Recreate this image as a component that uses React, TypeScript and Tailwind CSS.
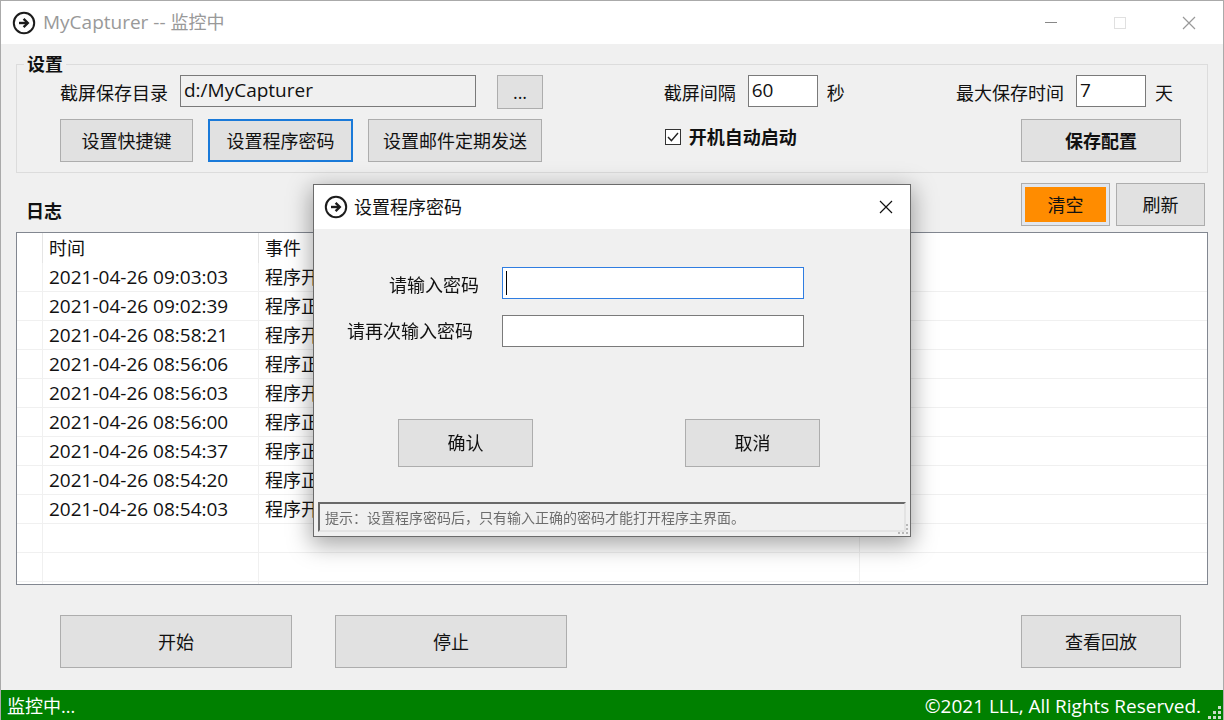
// src/App.tsx
import React from "react";

const logs = [
  { time: "2021-04-26 09:03:03", event: "程序开启" },
  { time: "2021-04-26 09:02:39", event: "程序正常退出" },
  { time: "2021-04-26 08:58:21", event: "程序开启" },
  { time: "2021-04-26 08:56:06", event: "程序正常退出" },
  { time: "2021-04-26 08:56:03", event: "程序开启" },
  { time: "2021-04-26 08:56:00", event: "程序正常退出" },
  { time: "2021-04-26 08:54:37", event: "程序正常退出" },
  { time: "2021-04-26 08:54:20", event: "程序正常退出" },
  { time: "2021-04-26 08:54:03", event: "程序开启" },
];

const button = "border border-[#adadad] bg-[#e1e1e1] text-center";
const textBox = "h-8 border border-[#7a7a7a] px-[3px] pb-0.5 text-[19px] outline-none";
const cell = "h-[29px] border-b border-r border-[#f0f0f0] p-0 pl-1.5 leading-7";

const AppIcon: React.FC = () => (
  <svg
    className="size-6 shrink-0"
    viewBox="0 0 24 24"
    fill="none"
    stroke="#1c1c1c"
    strokeWidth="2"
    aria-hidden="true"
  >
    <circle cx="12" cy="12" r="10.2" />
    <path d="M7 12h8.5" strokeWidth="2.4" />
    <path d="M11.6 7.8l4.2 4.2-4.2 4.2" strokeWidth="2.4" />
  </svg>
);

const CloseIcon: React.FC = () => (
  <svg
    className="size-3.5"
    viewBox="0 0 14 14"
    fill="none"
    stroke="currentColor"
    strokeWidth="1.2"
    aria-hidden="true"
  >
    <path d="M1 1l12 12M13 1L1 13" />
  </svg>
);

// Three-step triangle of dots in the corner of a resizable window
const Grip: React.FC = () => (
  <svg className="size-3.5" viewBox="0 0 14 14" fill="currentColor" aria-hidden="true">
    <path d="M1 10h3v3H1zM6 10h3v3H6zM11 10h3v3h-3zM6 5h3v3H6zM11 5h3v3h-3zM11 0h3v3h-3z" />
  </svg>
);

const TitleBar: React.FC = () => (
  <header className="flex h-[43px] items-center bg-white pl-[11px] text-[#999]">
    <AppIcon />
    <h1 className="ml-[7px] flex-1 pb-0.5">
      <span className="text-[19px]">MyCapturer -- </span>监控中
    </h1>
    <div className="flex self-stretch">
      <button aria-label="最小化" className="flex w-[69px] items-center justify-center">
        <span className="h-px w-3 bg-[#888]" />
      </button>
      <button
        aria-label="最大化"
        disabled
        className="flex w-[69px] items-center justify-center"
      >
        <span className="size-3 border border-[#e0e0e0]" />
      </button>
      <button aria-label="关闭" className="flex w-[69px] items-center justify-center">
        <CloseIcon />
      </button>
    </div>
  </header>
);

const Settings: React.FC = () => (
  <fieldset className="mx-[15px] mt-[9px] border border-[#dcdcdc] px-[7px] pb-2.5">
    <legend className="px-[3px] font-bold leading-[22px]">设置</legend>
    <div className="grid grid-cols-[603fr_292fr_auto] gap-y-2.5 pl-9 pr-[19px]">
      <div className="flex h-[34px] items-start">
        <label htmlFor="dir" className="leading-9">
          截屏保存目录
        </label>
        <input
          id="dir"
          readOnly
          defaultValue="d:/MyCapturer"
          className={`${textBox} ml-3 w-[296px] bg-[#f0f0f0]`}
        />
        <button className={`${button} ml-[21px] h-[34px] w-[46px]`}>...</button>
      </div>
      <div className="flex h-[34px] items-start">
        <label htmlFor="interval" className="leading-9">
          截屏间隔
        </label>
        <input
          id="interval"
          defaultValue="60"
          className={`${textBox} ml-3 mr-[9px] w-[70px] bg-white`}
        />
        <span className="leading-9">秒</span>
      </div>
      <div className="flex h-[34px] items-start justify-end pr-2">
        <label htmlFor="keep" className="leading-9">
          最大保存时间
        </label>
        <input
          id="keep"
          defaultValue="7"
          className={`${textBox} ml-3 mr-[9px] w-[70px] bg-white`}
        />
        <span className="leading-9">天</span>
      </div>

      <div className="flex h-[43px] gap-[15px]">
        <button className={`${button} w-[133px]`}>设置快捷键</button>
        <button className="w-[145px] border-2 border-[#1a7ad9] bg-[#e1e1e1] text-center">
          设置程序密码
        </button>
        <button className={`${button} w-[174px]`}>设置邮件定期发送</button>
      </div>
      <div className="pt-1.5">
        <label className="flex w-fit items-center gap-2 pl-px font-bold">
          <span className="relative flex">
            <input
              type="checkbox"
              defaultChecked
              className="peer size-4 appearance-none border border-[#333] bg-white"
            />
            <svg
              className="pointer-events-none absolute inset-0 hidden size-4 peer-checked:block"
              viewBox="0 0 16 16"
              fill="none"
              stroke="#222"
              strokeWidth="1.4"
              aria-hidden="true"
            >
              <path d="M3 8l3.4 3.6L13 4" />
            </svg>
          </span>
          开机自动启动
        </label>
      </div>
      <div className="flex justify-end">
        <button className={`${button} w-40 font-bold`}>保存配置</button>
      </div>
    </div>
  </fieldset>
);

const LogTable: React.FC = () => (
  <section className="mx-[15px]">
    <div className="mt-2.5 flex h-[43px] items-stretch gap-1.5 pr-[3px]">
      <h2 className="flex-1 pl-2.5 pt-4 font-bold">日志</h2>
      <button className="w-[89px] border border-[#adadad] bg-[#e1e6ee] p-[3px]">
        <span className="flex h-full items-center justify-center bg-[#ff8c00]">清空</span>
      </button>
      <button className={`${button} w-[89px]`}>刷新</button>
    </div>
    <div className="mt-1.5 border border-[#828790] bg-white">
      <table className="w-full table-fixed border-separate border-spacing-0 text-left">
        <colgroup>
          <col className="w-[26px]" />
          <col className="w-[216px]" />
          <col className="w-[601px]" />
          <col />
        </colgroup>
        <thead>
          <tr>
            <th className="h-[30px] border-r border-[#e5e5e5] p-0" />
            <th className="border-r border-[#e5e5e5] p-0 pl-1.5 font-normal">时间</th>
            <th className="border-r border-[#e5e5e5] p-0 pl-1.5 font-normal">事件</th>
            <th className="p-0" />
          </tr>
        </thead>
        <tbody>
          {logs.map((log) => (
            <tr key={log.time}>
              <td className={cell} />
              <td className={`${cell} text-[19px]`}>{log.time}</td>
              <td className={cell}>{log.event}</td>
              <td className="border-b border-[#f0f0f0] p-0" />
            </tr>
          ))}
          {[0, 1].map((row) => (
            <tr key={row}>
              <td className={cell} />
              <td className={cell} />
              <td className={cell} />
              <td className="border-b border-[#f0f0f0] p-0" />
            </tr>
          ))}
          <tr>
            <td className="h-0.5 border-r border-[#f0f0f0] p-0" />
            <td className="border-r border-[#f0f0f0] p-0" />
            <td className="border-r border-[#f0f0f0] p-0" />
            <td className="p-0" />
          </tr>
        </tbody>
      </table>
    </div>
  </section>
);

const PasswordDialog: React.FC = () => (
  <div className="pointer-events-none fixed inset-0 flex items-center justify-center">
    <div
      role="dialog"
      aria-labelledby="dialog-title"
      className="pointer-events-auto relative w-[598px] border border-[#6b6b6b] bg-[#f0f0f0] shadow-[0_6px_22px_2px_rgba(0,0,0,0.35)]"
    >
      <div className="flex h-11 items-center bg-white pl-2.5">
        <AppIcon />
        <h2 id="dialog-title" className="ml-1.5 flex-1">
          设置程序密码
        </h2>
        <button aria-label="关闭" className="flex h-full w-12 items-center justify-center">
          <CloseIcon />
        </button>
      </div>
      <form className="px-1 pb-1" onSubmit={(e) => e.preventDefault()}>
        <div className="grid grid-cols-[184px_302px] gap-y-4 pt-[38px]">
          <label htmlFor="pwd" className="h-8 pr-[23px] text-right leading-9">
            请输入密码
          </label>
          <div className="relative h-8">
            <input
              id="pwd"
              type="password"
              className="block h-8 w-full border border-[#2f7de1] bg-white px-[3px] outline-none"
            />
            <span className="absolute left-1 top-1 h-6 w-px bg-black" />
          </div>
          <label htmlFor="pwd2" className="h-8 pr-[29px] text-right leading-8">
            请再次输入密码
          </label>
          <input id="pwd2" type="password" className={`${textBox} bg-white`} />
        </div>
        <div className="flex justify-center gap-[152px] pb-[35px] pr-1.5 pt-[72px]">
          <button className={`${button} h-12 w-[135px]`}>确认</button>
          <button className={`${button} h-12 w-[135px]`}>取消</button>
        </div>
        <p className="h-[30px] border-2 border-b-[#e3e3e3] border-l-[#696969] border-r-[#e3e3e3] border-t-[#696969] pl-[5px] text-sm leading-7 text-[#6d6d6d]">
          提示：设置程序密码后，只有输入正确的密码才能打开程序主界面。
        </p>
      </form>
      <svg
        className="absolute bottom-0.5 right-0.5 size-2.5"
        viewBox="0 0 10 10"
        fill="#b8b8b8"
        aria-hidden="true"
      >
        <path d="M0 8h2v2H0zM4 8h2v2H4zM8 8h2v2H8zM8 4h2v2H8zM8 0h2v2H8z" />
      </svg>
    </div>
  </div>
);

const App: React.FC = () => {
  return (
    <div className="flex min-h-screen flex-col border border-b-0 border-[#aaa] bg-[#f0f0f0] font-['Open_Sans','Noto_Sans_CJK_SC',sans-serif] text-lg leading-6 text-[#111]">
      <TitleBar />
      <main className="flex-1">
        <Settings />
        <LogTable />
        <div className="mt-[30px] flex h-[53px] pl-[59px] pr-[42px]">
          <button className={`${button} w-[232px]`}>开始</button>
          <button className={`${button} ml-[43px] w-[232px]`}>停止</button>
          <button className={`${button} ml-auto w-40`}>查看回放</button>
        </div>
      </main>
      <footer className="flex h-[30px] items-center bg-[#008000] pl-1.5 pt-0.5 text-white">
        <span className="flex-1">监控中...</span>
        <span className="text-[19px]">©2021 LLL, All Rights Reserved.</span>
        <span className="ml-1.5 self-end pr-0.5 text-[#c8dcc8]">
          <Grip />
        </span>
      </footer>
      <PasswordDialog />
    </div>
  );
};

export default App;
